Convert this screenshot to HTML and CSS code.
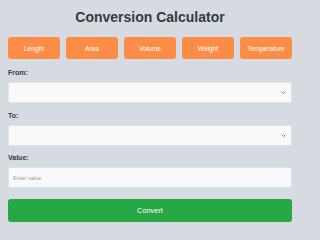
FILE: index.html
```html
<!DOCTYPE html>
<html lang="en">
<head>
<meta charset="utf-8">
<title>Conversion Calculator</title>
<link rel="stylesheet" href="styles.css">
</head>
<body>
<div class="calc">
  <h1 class="title">Conversion Calculator</h1>
  <div class="tabs">
    <button class="tab">Length</button>
    <button class="tab">Area</button>
    <button class="tab">Volume</button>
    <button class="tab">Weight</button>
    <button class="tab">Temperature</button>
  </div>
  <div class="group">
    <label class="label">From:</label>
    <div class="select-wrap">
      <select class="field select"></select>
      <svg class="chev" width="5" height="3" viewBox="0 0 5 3"><path d="M0.5 0.5 L2.5 2.5 L4.5 0.5" fill="none" stroke="#666" stroke-width="0.8"/></svg>
    </div>
  </div>
  <div class="group">
    <label class="label">To:</label>
    <div class="select-wrap">
      <select class="field select"></select>
      <svg class="chev" width="5" height="3" viewBox="0 0 5 3"><path d="M0.5 0.5 L2.5 2.5 L4.5 0.5" fill="none" stroke="#666" stroke-width="0.8"/></svg>
    </div>
  </div>
  <div class="group">
    <label class="label">Value:</label>
    <input class="field input" type="text" placeholder="Enter value">
  </div>
  <button class="convert">Convert</button>
</div>
</body>
</html>
```

FILE: styles.css
```css
html, body {
  margin: 0;
  padding: 0;
  background: #d5dbe0;
  font-family: "Liberation Sans", Arial, sans-serif;
}
.calc {
  width: 284px;
  padding: 9px 8px 0 8px;
  display: flex;
  flex-direction: column;
}
.title {
  margin: 0 0 11px 0;
  font-size: 14px;
  line-height: 17px;
  font-weight: 700;
  color: #343a40;
  text-align: center;
}
.tabs {
  display: flex;
  gap: 6px;
}
.tab {
  flex: 1;
  height: 22px;
  border: none;
  border-radius: 3px;
  background: #fd8c47;
  color: #fff;
  font-family: inherit;
  font-size: 6.6px;
  padding: 0;
}
.group {
  display: flex;
  flex-direction: column;
  margin-top: 9px;
}
.group + .group {
  margin-top: 7.5px;
}
.label {
  font-size: 7px;
  line-height: 10px;
  font-weight: 700;
  color: #343a40;
  margin-bottom: 4px;
}
.select-wrap {
  position: relative;
}
.field {
  box-sizing: border-box;
  width: 100%;
  height: 21px;
  margin: 0;
  border: 1px solid #dfe3e6;
  border-radius: 2px;
  background: #f8f9fa;
  font-family: inherit;
  font-size: 5.6px;
  padding: 0 4px;
  display: block;
}
.select {
  appearance: none;
  -webkit-appearance: none;
}
.input::placeholder {
  color: #9aa0a6;
}
.chev {
  position: absolute;
  right: 6px;
  top: 9px;
}
.convert {
  margin-top: 11px;
  height: 23px;
  border: none;
  border-radius: 3px;
  background: #28a745;
  color: #fff;
  font-family: inherit;
  font-size: 7.4px;
  padding: 0;
}
```
